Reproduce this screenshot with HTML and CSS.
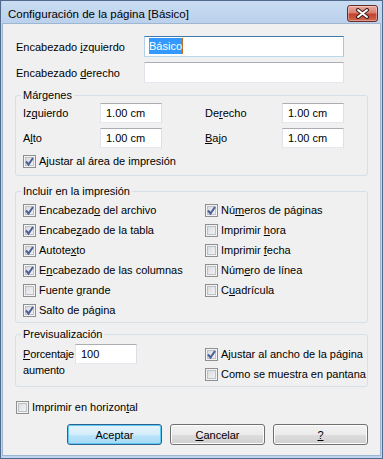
FILE: index.html
```html
<!DOCTYPE html>
<html lang="es">
<head>
  <meta charset="UTF-8">
  <title>Configuración de la página</title>
  <link rel="stylesheet" href="styles.css">
</head>
<body>

<div class="window">
  <div class="titlebar">
    <span class="title">Configuración de la página [Básico]</span>
    <button class="close-btn">
      <svg width="15" height="11" viewBox="0 0 15 11">
        <path d="M3 2 L12 9 M12 2 L3 9" stroke="#3b1f1c" stroke-width="4" stroke-linecap="round"/>
        <path d="M3 2 L12 9 M12 2 L3 9" stroke="#fff" stroke-width="2" stroke-linecap="round"/>
      </svg>
    </button>
  </div>

  <div class="client">
    <div class="field-row">
      <label>Encabezado <u>i</u>zquierdo</label>
      <div class="textbox wide focused"><span class="selected">Básico</span></div>
    </div>
    <div class="field-row">
      <label>Encabezado <u>d</u>erecho</label>
      <div class="textbox wide"></div>
    </div>

    <!-- Márgenes -->
    <fieldset class="group margins">
      <legend>Márgenes</legend>
      <div class="margin-grid">
        <label>Iz<u>q</u>uierdo</label>
        <div class="textbox small">1.00 cm</div>
        <label>De<u>r</u>echo</label>
        <div class="textbox small">1.00 cm</div>
        <label>A<u>l</u>to</label>
        <div class="textbox small">1.00 cm</div>
        <label><u>B</u>ajo</label>
        <div class="textbox small">1.00 cm</div>
      </div>
      <div class="check fit-area">
        <span class="box"><svg width="11" height="11" viewBox="0 0 11 11"><path d="M2 5.5 L4.5 8.5 L9 2" fill="none" stroke="#4a5f97" stroke-width="2"/></svg></span>
        <span>A<u>j</u>ustar al área de impresión</span>
      </div>
    </fieldset>

    <!-- Incluir en la impresión -->
    <fieldset class="group include">
      <legend>Incluir en la impresión</legend>
      <div class="check-grid">
        <div class="check"><span class="box"><svg width="11" height="11" viewBox="0 0 11 11"><path d="M2 5.5 L4.5 8.5 L9 2" fill="none" stroke="#4a5f97" stroke-width="2"/></svg></span><span>Encabezad<u>o</u> del archivo</span></div>
        <div class="check"><span class="box"><svg width="11" height="11" viewBox="0 0 11 11"><path d="M2 5.5 L4.5 8.5 L9 2" fill="none" stroke="#4a5f97" stroke-width="2"/></svg></span><span>Nú<u>m</u>eros de páginas</span></div>
        <div class="check"><span class="box"><svg width="11" height="11" viewBox="0 0 11 11"><path d="M2 5.5 L4.5 8.5 L9 2" fill="none" stroke="#4a5f97" stroke-width="2"/></svg></span><span>Encabe<u>z</u>ado de la tabla</span></div>
        <div class="check"><span class="box"></span><span>Imprimir <u>h</u>ora</span></div>
        <div class="check"><span class="box"><svg width="11" height="11" viewBox="0 0 11 11"><path d="M2 5.5 L4.5 8.5 L9 2" fill="none" stroke="#4a5f97" stroke-width="2"/></svg></span><span>Autote<u>x</u>to</span></div>
        <div class="check"><span class="box"></span><span>Imprimir <u>f</u>echa</span></div>
        <div class="check"><span class="box"><svg width="11" height="11" viewBox="0 0 11 11"><path d="M2 5.5 L4.5 8.5 L9 2" fill="none" stroke="#4a5f97" stroke-width="2"/></svg></span><span>E<u>n</u>cabezado de las columnas</span></div>
        <div class="check"><span class="box"></span><span>Núm<u>e</u>ro de línea</span></div>
        <div class="check"><span class="box"></span><span>Fuente <u>g</u>rande</span></div>
        <div class="check"><span class="box"></span><span>C<u>u</u>adrícula</span></div>
        <div class="check"><span class="box"><svg width="11" height="11" viewBox="0 0 11 11"><path d="M2 5.5 L4.5 8.5 L9 2" fill="none" stroke="#4a5f97" stroke-width="2"/></svg></span><span>Salto de página</span></div>
      </div>
    </fieldset>

    <!-- Previsualización -->
    <fieldset class="group preview">
      <legend>Previsualización</legend>
      <div class="preview-body">
        <div class="zoom">
          <div class="zoom-label"><span><u>P</u>orcentaje</span><span>aumento</span></div>
          <div class="textbox small">100</div>
        </div>
        <div class="preview-checks">
          <div class="check"><span class="box"><svg width="11" height="11" viewBox="0 0 11 11"><path d="M2 5.5 L4.5 8.5 L9 2" fill="none" stroke="#4a5f97" stroke-width="2"/></svg></span><span>A<u>j</u>ustar al ancho de la página</span></div>
          <div class="check"><span class="box"></span><span>Como se muestra en pantana</span></div>
        </div>
      </div>
    </fieldset>

    <div class="check landscape"><span class="box"></span><span>Imprimir en horizon<u>t</u>al</span></div>

    <div class="buttons">
      <button class="btn default">Aceptar</button>
      <button class="btn"><u>C</u>ancelar</button>
      <button class="btn"><u>?</u></button>
    </div>
  </div>
</div>

</body>
</html>
```

FILE: styles.css
```css
body {
  margin: 0;
  font-family: "Liberation Sans", Arial, sans-serif;
  font-size: 11px;
  color: #000;
  background: #fff;
}

.window {
  width: 383px;
  height: 459px;
  box-sizing: border-box;
  border: 1px solid #4f6a8b;
  padding: 0 1px 2px 1px;
  background: #bfd4ee;
  display: flex;
  flex-direction: column;
}

.titlebar {
  height: 22px;
  display: flex;
  align-items: flex-start;
  padding: 0 3px 0 6px;
  background: linear-gradient(#c9dcf2, #bbd1ec);
}

.title {
  margin-top: 5px;
  line-height: 16px;
  font-size: 11.5px;
  color: #000;
}

.close-btn {
  margin-left: auto;
  margin-top: 4px;
  width: 31px;
  height: 17px;
  padding: 0;
  border: 1px solid #6b2a22;
  border-radius: 3px;
  background: linear-gradient(#e9a99d 0%, #d9806f 45%, #c4412c 55%, #cf6a4f 100%);
  box-shadow: inset 0 0 0 1px rgba(255,255,255,0.35);
  display: flex;
  align-items: center;
  justify-content: center;
}

.client {
  flex: 1;
  background: #f0f0f0;
  border: 1px solid #9fb6d2;
  padding: 12px 12px 0 10px;
}

label {
  line-height: 16px;
}

/* text boxes */
.textbox {
  box-sizing: border-box;
  height: 20px;
  background: #fff;
  border: 1px solid;
  border-color: #abadb3 #dbdfe6 #e3e9ef #e2e3ea;
  padding: 0 4px;
  line-height: 18px;
  flex-shrink: 0;
}

.textbox.wide {
  width: 200px;
  height: 21px;
  line-height: 19px;
}

.textbox.small {
  width: 62px;
  padding-left: 5px;
}

.textbox.focused {
  border-color: #3d7bad #a4c9e3 #b7d9ed #b5cfe7;
}

.selected {
  background: #3399ff;
  color: #fff;
  padding: 2px 0;
  border-right: 1px solid #c06a20;
}

.field-row {
  display: flex;
  align-items: center;
  margin-bottom: 5px;
}

.field-row label {
  width: 128px;
  padding-left: 3px;
}

/* group boxes */
.group {
  min-width: 0;
  margin: 0 0 0 2px;
  padding: 0 7px 0 7px;
  border: 1px solid #d5dfe5;
  border-radius: 3px;
}

.group legend {
  padding: 0 2px;
  margin-left: -2px;
  line-height: 15px;
}

.margins {
  margin-top: 4px;
  padding-bottom: 6px;
}

.margin-grid {
  display: grid;
  grid-template-columns: 77px 105px 77px 62px;
  row-gap: 5px;
  align-items: center;
}

.fit-area {
  margin-top: 5px;
}

.include {
  margin-top: 8px;
  padding-top: 3px;
}

.check-grid {
  display: grid;
  grid-template-columns: 182px 1fr;
  grid-auto-rows: 20px;
}

.preview {
  margin-top: 4px;
  padding-top: 2px;
  padding-bottom: 2px;
}

.preview-body {
  display: flex;
}

.zoom {
  width: 182px;
  flex-shrink: 0;
  display: flex;
  align-items: flex-start;
}

.zoom-label {
  width: 52px;
  margin-top: 2px;
  display: flex;
  flex-direction: column;
  line-height: 16px;
  letter-spacing: -0.15px;
}

.preview-checks .check {
  height: 20px;
}

/* check boxes */
.check {
  display: flex;
  align-items: center;
  height: 16px;
  white-space: nowrap;
}

.box {
  width: 13px;
  height: 13px;
  box-sizing: border-box;
  border: 1px solid #8e8f8f;
  background: linear-gradient(135deg, #d3d6da, #f9f9f9);
  box-shadow: inset 0 0 0 1px #f4f4f4, inset 0 0 0 2px #bcc1c7;
  margin-right: 3px;
  display: flex;
  align-items: center;
  justify-content: center;
  flex-shrink: 0;
}

.box svg {
  display: block;
}

.landscape {
  margin: 12px 0 0 3px;
}

/* buttons */
.buttons {
  display: flex;
  justify-content: flex-end;
  gap: 8px;
  margin-top: 9px;
}

.btn {
  width: 95px;
  height: 21px;
  padding: 0;
  font-family: inherit;
  font-size: 11px;
  color: #000;
  border: 1px solid #707070;
  border-radius: 3px;
  background: linear-gradient(#f2f2f2 0%, #ebebeb 50%, #dddddd 50%, #cfcfcf 100%);
  box-shadow: inset 0 0 0 1px #fcfcfc;
}

.btn.default {
  border-color: #2c628b;
  background: linear-gradient(#e5f4fc 0%, #d4edfb 50%, #bde5fb 50%, #a7d9f5 100%);
  box-shadow: inset 0 0 0 1px #5ec8f7;
}
```
